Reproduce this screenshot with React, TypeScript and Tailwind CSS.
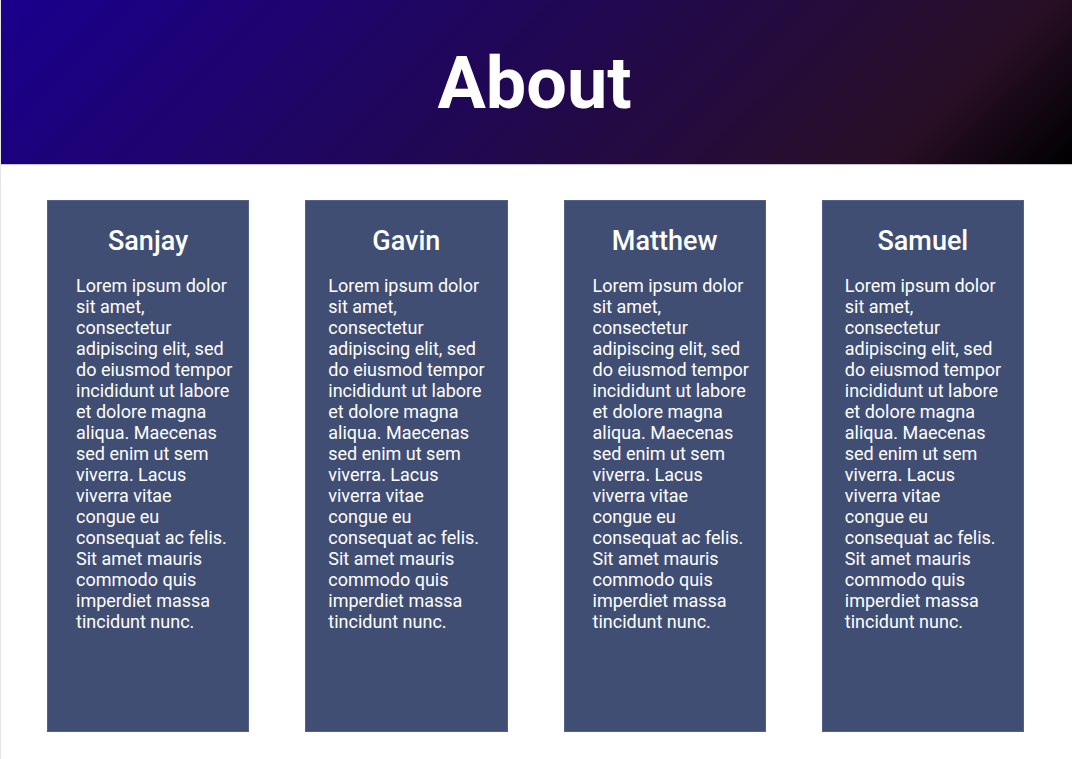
type Member = { name: string; padding: string };

const members: Member[] = [
  { name: "Sanjay", padding: "pl-7 pr-3.5" },
  { name: "Gavin", padding: "pl-[22px] pr-5" },
  { name: "Matthew", padding: "pl-7 pr-3.5" },
  { name: "Samuel", padding: "pl-[22px] pr-5" },
];

const bio =
  "Lorem ipsum dolor sit amet, consectetur adipiscing elit, sed do eiusmod tempor incididunt ut labore et dolore magna aliqua. Maecenas sed enim ut sem viverra. Lacus viverra vitae congue eu consequat ac felis. Sit amet mauris commodo quis imperdiet massa tincidunt nunc.";

function MemberCard({ name, padding }: Member) {
  return (
    <article className="border border-[#53608a] bg-[#414e73] pt-6 pb-[99px] text-white">
      <h2 className="text-center text-[27px] leading-8 font-medium">{name}</h2>
      <p className={`mt-[18px] text-[18px] leading-[21px] ${padding}`}>{bio}</p>
    </article>
  );
}

export default function App() {
  return (
    <div className="min-h-screen border-l border-[#e5e5e5] bg-white font-['Roboto',sans-serif]">
      <header className="border-b border-[#c9c2d4] bg-[linear-gradient(135deg,#1a008c_0%,#1a0088_4%,#200756_45%,#280f25_85%,#000000_100%)] pt-[42px] pr-1 pb-[38px] text-center">
        <h1 className="text-[72px] leading-[84px] font-bold text-white">About</h1>
      </header>
      <main className="grid grid-cols-4 gap-14 pt-[35px] pr-12 pb-7 pl-[46px]">
        {members.map((m) => (
          <MemberCard key={m.name} {...m} />
        ))}
      </main>
    </div>
  );
}
